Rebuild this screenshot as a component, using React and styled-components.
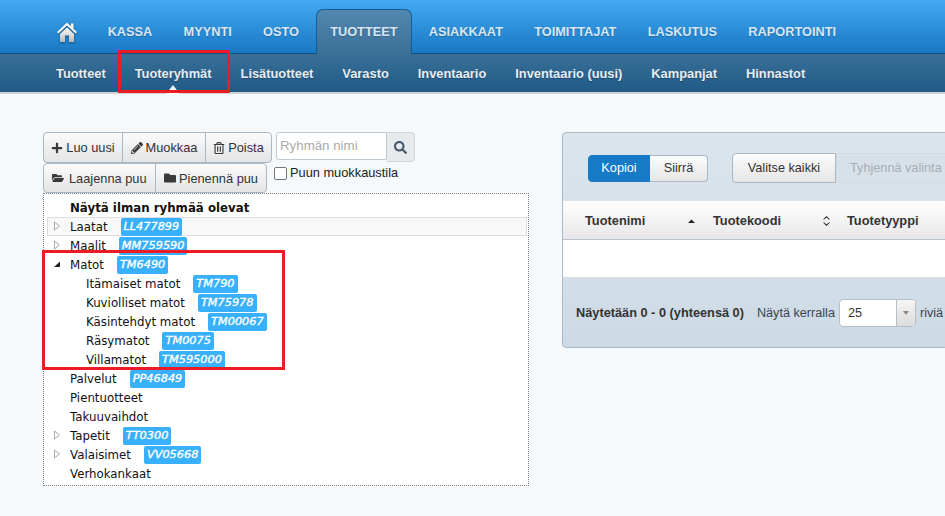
import React from "react";
import styled, { createGlobalStyle } from "styled-components";
import { FaPlus, FaPencilAlt, FaRegTrashAlt, FaFolderOpen, FaFolder, FaSearch } from "react-icons/fa";

const Global = createGlobalStyle`
  html, body { margin: 0; padding: 0; background: #f5f9fc; }
  * { box-sizing: border-box; }
  #root { width: 945px; height: 516px; overflow: hidden; }
`;

const Page = styled.div`
  position: relative;
  width: 945px;
  height: 516px;
  overflow: hidden;
  background: #f5f9fc;
  font-family: "Liberation Sans", Arial, sans-serif;
  font-size: 12.8px;
  color: #333;
`;

const TopBar = styled.nav`
  height: 54px;
  display: flex;
  align-items: flex-end;
  padding-left: 57px;
  background: linear-gradient(#43a9f2, #1878c3);
  border-bottom: 1px solid #14507e;
`;

const HomeLink = styled.a`
  display: flex;
  align-items: center;
  width: 35px;
  height: 44px;
  svg { width: 20px; height: 20px; filter: drop-shadow(0 1px 1px rgba(0,0,0,.4)); margin-top: 1px; }
`;

const TopTab = styled.a`
  height: ${p => (p.$active ? "45px" : "44px")};
  margin: 0 1px ${p => (p.$active ? "-1px" : "0")};
  padding: 0 13.65px;
  display: flex;
  align-items: center;
  padding-bottom: ${p => (p.$active ? "1px" : "0")};
  font-size: 12.75px;
  font-weight: bold;
  color: #d9e6f1;
  border: 1px solid ${p => (p.$active ? "#165c92" : "transparent")};
  border-bottom: 0;
  border-radius: 7px 7px 0 0;
  background: ${p => (p.$active ? "linear-gradient(#5288af, #3a7098)" : "transparent")};
  text-shadow: 0 1px 1px rgba(0,0,0,.2);
`;

const SubBar = styled.nav`
  height: 40px;
  display: flex;
  align-items: center;
  gap: 29px;
  padding: 0 0 0 56px;
  background: linear-gradient(#3a7098, #205a87);
  border-bottom: 2px solid #cfd3d6;
`;

const SubTab = styled.a`
  position: relative;
  height: 38px;
  display: flex;
  align-items: center;
  font-size: 12.85px;
  font-weight: bold;
  color: #e6edf2;
  text-shadow: 0 1px 1px rgba(0,0,0,.25);
  ${p => p.$active && `
    &::after {
      content: "";
      position: absolute;
      left: 50%;
      bottom: -2px;
      margin-left: -7px;
      border-left: 7px solid transparent;
      border-right: 7px solid transparent;
      border-bottom: 9px solid #f5f9fc;
    }
  `}
`;

const Main = styled.main`
  display: flex;
  align-items: flex-start;
  gap: 33px;
  padding: 38px 0 0 43px;
`;

const LeftColumn = styled.section`
  width: 486px;
  flex: none;
`;

const ToolRows = styled.div`
  display: flex;
  height: 61px;
`;

const ButtonStack = styled.div`
  display: flex;
  flex-direction: column;
  align-items: flex-start;
`;

const BtnGroup = styled.div`
  display: flex;
  height: ${p => p.$h || 31}px;
`;

const Btn = styled.button`
  height: 100%;
  display: flex;
  align-items: center;
  justify-content: ${p => (p.$pad ? "flex-start" : "center")};
  gap: 3px;
  width: ${p => p.$w}px;
  padding: 0 0 0 ${p => p.$pad || 0}px;
  font-family: inherit;
  font-size: 12.8px;
  color: #333;
  background: linear-gradient(#fbfbfb, #e4e4e4);
  border: 1px solid #a9b8c4;
  margin-left: -1px;
  &:first-child { margin-left: 0; border-radius: 4px 0 0 4px; gap: ${p => (p.$pad ? 5 : 3)}px; }
  &:last-child { border-radius: 0 4px 4px 0; }
  svg { font-size: 12px; color: #3a3a3a; }
`;

const SearchSide = styled.div`
  margin-left: 4px;
  width: 141px;
`;

const SearchRow = styled.div`
  display: flex;
  height: 30px;
`;

const SearchInput = styled.div`
  width: 111px;
  height: 28px;
  background: #fff;
  border: 1px solid #bcc8d2;
  border-radius: 3px 0 0 3px;
  color: #aaa;
  font-size: 13.3px;
  line-height: 26px;
  padding-left: 3px;
`;

const SearchBtn = styled.div`
  width: 28px;
  height: 30px;
  display: flex;
  align-items: center;
  justify-content: center;
  background: #e6eaed;
  border: 1px solid #d0d6db;
  border-left: 0;
  border-radius: 0 4px 4px 0;
  color: #455766;
  font-size: 13px;
`;

const CheckLabel = styled.label`
  display: flex;
  align-items: center;
  margin: 4px 0 0 -2px;
  font-size: 12.8px;
  color: #222;
  line-height: 14px;
`;

const CheckBox = styled.span`
  width: 13px;
  height: 13px;
  background: #fff;
  border: 1px solid #767676;
  border-radius: 2px;
  margin-right: 3px;
`;

const Tree = styled.div`
  width: 486px;
  height: 293px;
  border: 1px dotted #808080;
  padding: 4px 1px 0 3px;
  font-family: "DejaVu Sans", Verdana, sans-serif;
  font-size: 11.8px;
  color: #111;
  background: #fff;
`;

const TreeRow = styled.div`
  height: 19px;
  display: flex;
  align-items: center;
  padding-left: ${p => (p.$child ? 38 : 22)}px;
  position: relative;
  border: 1px solid ${p => (p.$hover ? "#ddd" : "transparent")};
  background: ${p => (p.$hover ? "#f8f8f8" : "transparent")};
  font-weight: ${p => (p.$strong ? "bold" : "normal")};
`;

const Arrow = styled.svg`
  position: absolute;
  left: 5px;
  top: 3px;
  width: 8px;
  height: 10px;
`;

const Badge = styled.span`
  display: inline-block;
  height: 18px;
  line-height: 18px;
  padding: 0 3px;
  margin-left: 13px;
  background: #38b0fc;
  color: #fff;
  border-radius: 2px;
  font-style: italic;
  font-size: 11.3px;
  -webkit-text-stroke: 0.35px #fff;
`;

const Panel = styled.section`
  width: 460px;
  height: 216px;
  flex: none;
  background: linear-gradient(#dbe5ed, #cddae5);
  border: 1px solid #a9bac8;
  border-radius: 4px;
  display: flex;
  flex-direction: column;
`;

const PanelTools = styled.div`
  height: 68px;
  display: flex;
  align-items: center;
  padding: 2px 0 0 25px;
`;

const Toggle = styled.div`
  display: flex;
  height: 27px;
  margin-right: 24px;
`;

const ToggleBtn = styled.span`
  display: flex;
  align-items: center;
  justify-content: center;
  width: ${p => p.$w}px;
  font-size: 12.7px;
  color: ${p => (p.$on ? "#fff" : "#333")};
  background: ${p => (p.$on ? "#167ac6" : "linear-gradient(#fbfbfb, #e6e6e6)")};
  border: 1px solid ${p => (p.$on ? "#167ac6" : "#a9b8c4")};
  border-left-width: ${p => (p.$on ? "1px" : "0")};
  &:first-child { border-radius: 4px 0 0 4px; }
  &:last-child { border-radius: 0 4px 4px 0; }
`;

const SelectGroup = styled.div`
  display: flex;
  height: 30px;
`;

const SelectBtn = styled.span`
  display: flex;
  align-items: center;
  justify-content: ${p => (p.$off ? "flex-start" : "center")};
  padding-left: ${p => (p.$off ? "13px" : "0")};
  width: ${p => p.$w}px;
  font-size: 12.7px;
  color: ${p => (p.$off ? "#a5aeb6" : "#333")};
  background: ${p => (p.$off ? "#d8e1e8" : "linear-gradient(#fbfbfb, #e6e6e6)")};
  border: 1px solid ${p => (p.$off ? "#d2dbe2" : "#a9b8c4")};
  border-radius: ${p => (p.$off ? "0" : "4px 0 0 4px")};
`;

const TableHead = styled.div`
  height: 39px;
  flex: none;
  display: flex;
  align-items: center;
  padding-top: 1px;
  background: linear-gradient(#fff, #e7e7e9);
  border-bottom: 1px solid #b6c3ce;
  font-weight: bold;
  font-size: 12.8px;
  color: #333;
`;

const HeadCell = styled.div`
  width: ${p => p.$w}px;
  flex: none;
  display: flex;
  align-items: center;
  justify-content: space-between;
  padding-left: 22px;
`;

const SortIcon = styled.svg`
  width: 9px;
  height: 12px;
  fill: #222;
  margin-right: ${p => -p.$shift}px;
`;

const TableBody = styled.div`
  height: 38px;
  flex: none;
  background: #fff;
  border-bottom: 1px solid #d5dde4;
`;

const PanelFoot = styled.div`
  flex: 1;
  display: flex;
  align-items: center;
  padding: 0 0 0 13px;
  font-size: 12.65px;
  color: #3a4550;
`;

const FootStrong = styled.strong`
  color: #333;
  font-size: 12.75px;
  margin-right: 13px;
`;

const PageSelect = styled.div`
  width: 77px;
  height: 28px;
  margin: 0 4px;
  display: flex;
  background: #fff;
  border: 1px solid #b5bfc7;
  border-radius: 4px;
  overflow: hidden;
`;

const PageValue = styled.span`
  flex: 1;
  padding-left: 8px;
  line-height: 26px;
  color: #333;
`;

const PageCaret = styled.span`
  width: 19px;
  display: flex;
  align-items: center;
  justify-content: center;
  background: linear-gradient(#f5f5f5, #dcdcdc);
  border-left: 1px solid #b5bfc7;
  &::after {
    content: "";
    border: 3px solid transparent;
    border-top: 4px solid #8a8a8a;
    border-bottom: 0;
  }
`;

const Highlight = styled.div`
  position: absolute;
  left: ${p => p.$l}px;
  top: ${p => p.$t}px;
  width: ${p => p.$w}px;
  height: ${p => p.$h}px;
  border: 3px solid #ed1c24;
  pointer-events: none;
`;

const tops = ["KASSA", "MYYNTI", "OSTO", "TUOTTEET", "ASIAKKAAT", "TOIMITTAJAT", "LASKUTUS", "RAPORTOINTI"];
const subs = ["Tuotteet", "Tuoteryhmät", "Lisätuotteet", "Varasto", "Inventaario", "Inventaario (uusi)", "Kampanjat", "Hinnastot"];

const tree = [
  { name: "Näytä ilman ryhmää olevat", strong: true },
  { name: "Laatat", code: "LL477899", arrow: "closed", hover: true },
  { name: "Maalit", code: "MM759590", arrow: "closed" },
  { name: "Matot", code: "TM6490", arrow: "open" },
  { name: "Itämaiset matot", code: "TM790", child: true },
  { name: "Kuviolliset matot", code: "TM75978", child: true },
  { name: "Käsintehdyt matot", code: "TM00067", child: true },
  { name: "Räsymatot", code: "TM0075", child: true },
  { name: "Villamatot", code: "TM595000", child: true },
  { name: "Palvelut", code: "PP46849" },
  { name: "Pientuotteet" },
  { name: "Takuuvaihdot" },
  { name: "Tapetit", code: "TT0300", arrow: "closed" },
  { name: "Valaisimet", code: "VV05668", arrow: "closed" },
  { name: "Verhokankaat" },
];

const TreeArrow = ({ kind }) =>
  kind === "open" ? (
    <Arrow viewBox="0 0 8 10"><path d="M1 8 L7 8 L7 2.5 Z" fill="#222" /></Arrow>
  ) : (
    <Arrow viewBox="0 0 8 10"><path d="M1.5 1 L6.5 5 L1.5 9 Z" fill="#fff" stroke="#aaa" /></Arrow>
  );

const HomeIcon = () => (
  <svg viewBox="0 0 20 20">
    <defs>
      <linearGradient id="homeFill" x1="0" y1="0" x2="0" y2="1">
        <stop offset="0" stopColor="#ffffff" />
        <stop offset="1" stopColor="#b9b9b9" />
      </linearGradient>
    </defs>
    <path d="M10 .5 L0 10 L1.4 11.6 L10 3.6 L18.6 11.6 L20 10 L16.5 6.7 V1.5 H14 V4.3 Z" fill="#f6f6f4" />
    <path d="M3 12 L10 5.4 L17 12 V20 H12 V13.5 H8 V20 H3 Z" fill="url(#homeFill)" />
  </svg>
);

export default function App() {
  return (
    <Page>
      <Global />
      <TopBar>
        <HomeLink><HomeIcon /></HomeLink>
        {tops.map(t => <TopTab key={t} $active={t === "TUOTTEET"}>{t}</TopTab>)}
      </TopBar>
      <SubBar>
        {subs.map(s => <SubTab key={s} $active={s === "Tuoteryhmät"}>{s}</SubTab>)}
      </SubBar>
      <Main>
        <LeftColumn>
          <ToolRows>
            <ButtonStack>
              <BtnGroup>
                <Btn $w={80}><FaPlus />Luo uusi</Btn>
                <Btn $w={84}><FaPencilAlt />Muokkaa</Btn>
                <Btn $w={67}><FaRegTrashAlt />Poista</Btn>
              </BtnGroup>
              <BtnGroup $h={30}>
                <Btn $w={113} $pad={8}><FaFolderOpen />Laajenna puu</Btn>
                <Btn $w={112} $pad={8}><FaFolder />Pienennä puu</Btn>
              </BtnGroup>
            </ButtonStack>
            <SearchSide>
              <SearchRow>
                <SearchInput>Ryhmän nimi</SearchInput>
                <SearchBtn><FaSearch /></SearchBtn>
              </SearchRow>
              <CheckLabel><CheckBox />Puun muokkaustila</CheckLabel>
            </SearchSide>
          </ToolRows>
          <Tree>
            {tree.map(n => (
              <TreeRow key={n.name} $child={n.child} $hover={n.hover} $strong={n.strong}>
                {n.arrow && <TreeArrow kind={n.arrow} />}
                {n.name}
                {n.code && <Badge>{n.code}</Badge>}
              </TreeRow>
            ))}
          </Tree>
        </LeftColumn>
        <Panel>
          <PanelTools>
            <Toggle>
              <ToggleBtn $on $w={62}>Kopioi</ToggleBtn>
              <ToggleBtn $w={58}>Siirrä</ToggleBtn>
            </Toggle>
            <SelectGroup>
              <SelectBtn $w={104}>Valitse kaikki</SelectBtn>
              <SelectBtn $off $w={120}>Tyhjennä valinta</SelectBtn>
            </SelectGroup>
          </PanelTools>
          <TableHead>
            <HeadCell $w={128}>Tuotenimi<SortIcon $shift={5} viewBox="0 0 9 12"><path d="M1 8 L4.5 4.5 L8 8 Z" /></SortIcon></HeadCell>
            <HeadCell $w={134}>Tuotekoodi<SortIcon $shift={6} viewBox="0 0 9 12"><path d="M4.5 1 L8 4.5 L6.8 4.5 L4.5 2.6 L2.2 4.5 L1 4.5 Z M4.5 11 L8 7.5 L6.8 7.5 L4.5 9.4 L2.2 7.5 L1 7.5 Z" /></SortIcon></HeadCell>
            <HeadCell $w={150}>Tuotetyyppi</HeadCell>
          </TableHead>
          <TableBody />
          <PanelFoot>
            <FootStrong>Näytetään 0 - 0 (yhteensä 0)</FootStrong>
            Näytä kerralla
            <PageSelect><PageValue>25</PageValue><PageCaret /></PageSelect>
            riviä
          </PanelFoot>
        </Panel>
      </Main>
      <Highlight $l={118} $t={50} $w={112} $h={43} />
      <Highlight $l={42} $t={250} $w={243} $h={120} />
    </Page>
  );
}
